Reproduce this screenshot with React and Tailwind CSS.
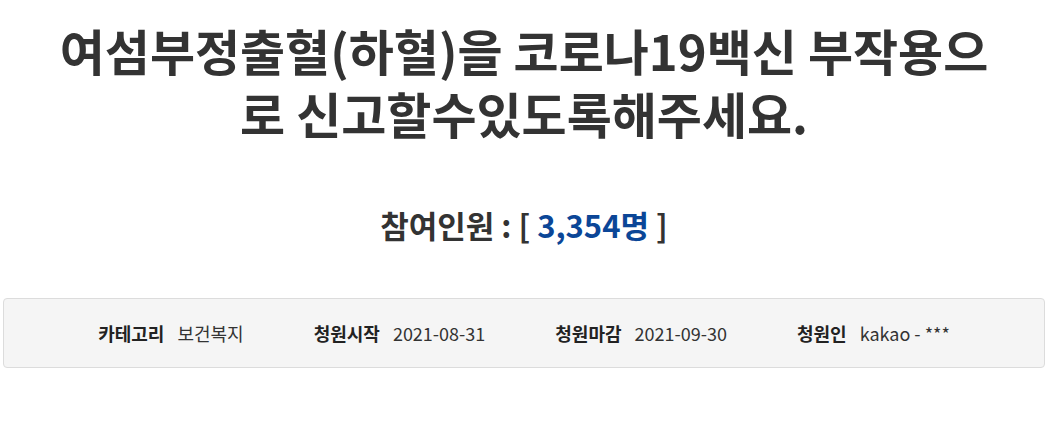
export default function App() {
  const font = { fontFamily: '"Noto Sans CJK KR", "Noto Sans", sans-serif' };
  return (
    <div className="w-[1048px] h-[432px] bg-white text-[#333]" style={font}>
      <div className="pt-[18px]">
        <h1 className="mx-auto w-[950px] text-center font-bold text-[49px] leading-[63px] text-[#333]">
          여섬부정출혈(하혈)을 코로나19백신 부작용으로 신고할수있도록해주세요.
        </h1>
      </div>
      <div className="mt-[61px] text-center font-bold text-[31px] leading-[40px]">
        참여인원 : [ <span className="text-[#0b4697]">3,354명</span> ]
      </div>
      <div className="mt-[53px] mx-[3px] h-[70px] border border-[#dcdcdc] rounded-[4px] bg-[#f5f5f5] flex items-center justify-center gap-[70px] text-[18px] text-[#333]">
        <div className="flex items-center gap-[13px]">
          <span className="font-bold text-[#222]">카테고리</span>
          <span>보건복지</span>
        </div>
        <div className="flex items-center gap-[13px]">
          <span className="font-bold text-[#222]">청원시작</span>
          <span>2021-08-31</span>
        </div>
        <div className="flex items-center gap-[13px]">
          <span className="font-bold text-[#222]">청원마감</span>
          <span>2021-09-30</span>
        </div>
        <div className="flex items-center gap-[13px]">
          <span className="font-bold text-[#222]">청원인</span>
          <span>kakao - ***</span>
        </div>
      </div>
    </div>
  );
}
